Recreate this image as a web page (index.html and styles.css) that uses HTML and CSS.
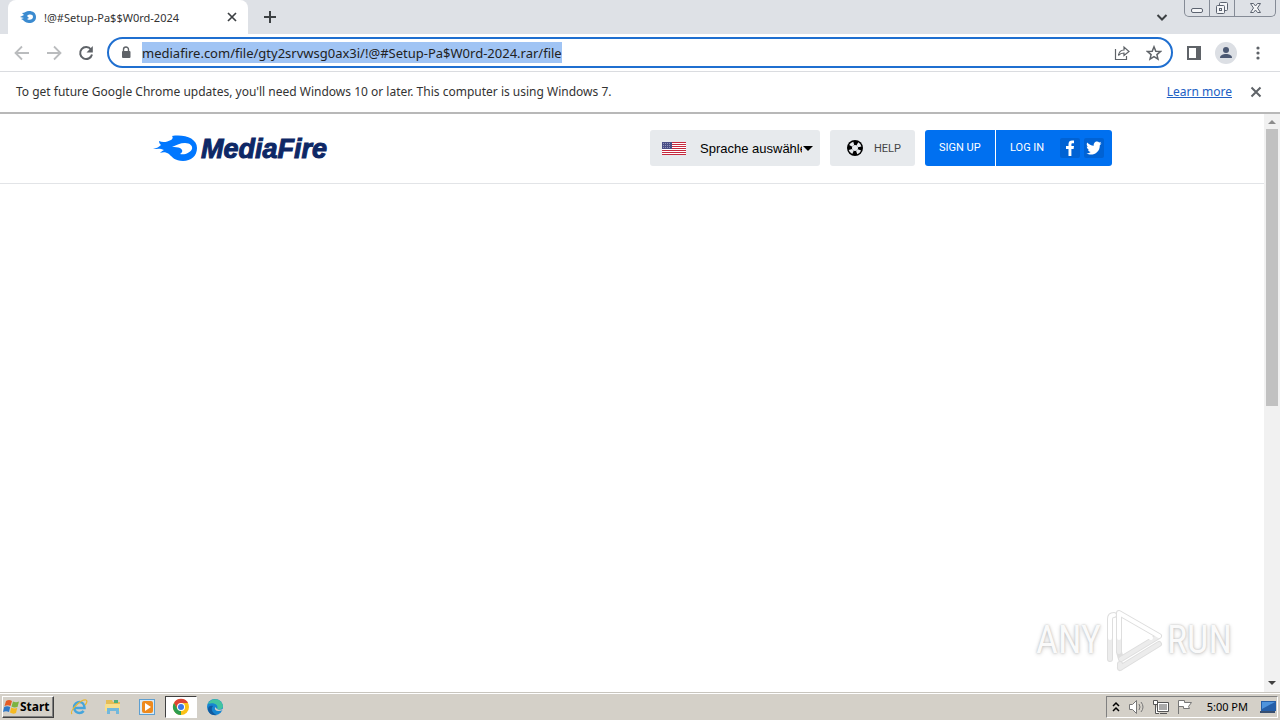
FILE: index.html
```html
<!DOCTYPE html>
<html lang="en">
<head>
    <meta charset="UTF-8">
    <meta name="viewport" content="width=device-width, initial-scale=1.0">
    <title>!@#Setup-Pa$$W0rd-2024</title>
    <link rel="stylesheet" href="styles.css">
</head>
<body>
    <!-- Tab strip -->
    <div class="tab-strip">
        <div class="tab">
            <svg class="favicon" width="16" height="16" viewBox="0 0 16 16"><path fill="#3b8bd0" fill-rule="evenodd" d="M0 8L4 6L2 4C5 4 6 2 9 2C13 2 16 4 16 8C16 12 13 14 9 14C5 14 4 11 1 10L4 9ZM7 7L9 9L7 10C10 12 13 10 13 8C13 5 9 5 7 7Z"/></svg>
            <span class="tab-title">!@#Setup-Pa$$W0rd-2024</span>
            <button class="icon-btn" aria-label="Close tab"><svg width="16" height="16" viewBox="0 0 16 16" fill="none" stroke="#3c4043" stroke-width="1.7"><path d="M4 4l8 8M12 4l-8 8"/></svg></button>
        </div>
        <button class="icon-btn new-tab" aria-label="New tab"><svg width="16" height="16" viewBox="0 0 16 16" fill="none" stroke="#3c4043" stroke-width="2"><path d="M8 2v12M2 8h12"/></svg></button>
        <button class="icon-btn tab-search" aria-label="Search tabs"><svg width="16" height="16" viewBox="0 0 16 16" fill="none" stroke="#3c4043" stroke-width="2"><path d="M3.5 6L8 10.500L12.500 6"/></svg></button>
        <div class="window-controls">
            <button class="icon-btn minimize" aria-label="Minimize"><svg width="24" height="16" viewBox="0 0 24 16" fill="#f4f5f7" stroke="#5c6370"><rect x="6.500" y="8.500" width="11" height="4" rx="1.500"/></svg></button>
            <button class="icon-btn restore" aria-label="Restore"><svg width="24" height="16" viewBox="0 0 24 16" fill="#f4f5f7" stroke="#5c6370"><rect x="9.500" y="2.500" width="8" height="8" rx="1"/><rect x="6.500" y="5.500" width="8" height="8" rx="1"/><rect x="9.500" y="8.500" width="2" height="2"/></svg></button>
            <button class="icon-btn close" aria-label="Close"><svg width="40" height="16" viewBox="0 0 40 16" fill="#f4f5f7" stroke="#5c6370"><path d="M15.500 3.500h3l2 2.500l2-2.500h3l-3 4.500l3 4.500h-3l-2-2.500l-2 2.500h-3l3-4.500z"/></svg></button>
        </div>
    </div>

    <!-- Address bar -->
    <div class="toolbar">
        <button class="icon-btn" aria-label="Back"><svg width="16" height="16" viewBox="0 0 16 16" fill="none" stroke="#babcbe" stroke-width="1.800"><path d="M15 8H2M8 1.500L1.500 8L8 14.500"/></svg></button>
        <button class="icon-btn" aria-label="Forward"><svg width="16" height="16" viewBox="0 0 16 16" fill="none" stroke="#babcbe" stroke-width="1.800"><path d="M1 8h13M8 1.500L14.500 8L8 14.500"/></svg></button>
        <button class="icon-btn" aria-label="Reload"><svg width="16" height="16" viewBox="0 0 16 16"><path d="M13 4.500A6 6 0 1 0 14 9.500" fill="none" stroke="#5f6368" stroke-width="2"/><path d="M14.800 1v6.500H8.500z" fill="#5f6368"/></svg></button>
        <div class="omnibox">
            <svg width="16" height="16" viewBox="0 0 16 16"><path d="M5.500 7V4.500a2.500 2.500 0 0 1 5 0V7" fill="none" stroke="#5f6368" stroke-width="1.400"/><rect x="4" y="6" width="8.500" height="7" rx="1" fill="#5f6368"/></svg>
            <input class="url" type="text" aria-label="Address" value="mediafire.com/file/gty2srvwsg0ax3i/!@#Setup-Pa$W0rd-2024.rar/file">
            <div class="omnibox-actions">
                <button class="icon-btn" aria-label="Share"><svg width="16" height="16" viewBox="0 0 16 16" fill="none" stroke="#5f6368" stroke-width="1.200"><path d="M1.500 4v10.500h11V11M4.500 10.500C5 7 7 5 10 5V2L15 6.500L10 10.500V8C7.500 8 6 8.500 4.500 10.500Z"/></svg></button>
                <button class="icon-btn" aria-label="Bookmark"><svg width="16" height="16" viewBox="0 0 16 16" fill="none" stroke="#5f6368" stroke-width="1.500"><path d="M8 1.800L9.800 6.200L14.500 6.500L10.900 9.600L12 14.200L8 11.700L4 14.200L5.100 9.600L1.500 6.500L6.200 6.200Z"/></svg></button>
            </div>
        </div>
        <button class="icon-btn" aria-label="Side panel"><svg width="16" height="16" viewBox="0 0 16 16"><path fill="#5f6368" fill-rule="evenodd" d="M1 1h14v14H1zM3 3v10h7V3z"/></svg></button>
        <button class="icon-btn profile" aria-label="Profile"><svg width="22" height="22" viewBox="0 0 22 22" fill="#4b5872"><circle cx="11" cy="11" r="11" fill="#dcdfe4"/><circle cx="11" cy="8" r="3"/><path d="M5 16c0-3 3-4 6-4s6 1 6 4z"/></svg></button>
        <button class="icon-btn" aria-label="Menu"><svg width="16" height="16" viewBox="0 0 16 16" fill="#5f6368"><circle cx="8" cy="3" r="1.600"/><circle cx="8" cy="8" r="1.600"/><circle cx="8" cy="13" r="1.600"/></svg></button>
    </div>

    <div class="infobar">
        <span>To get future Google Chrome updates, you'll need Windows 10 or later. This computer is using Windows 7.</span>
        <a href="#">Learn more</a>
        <button class="icon-btn" aria-label="Dismiss"><svg width="16" height="16" viewBox="0 0 16 16" fill="none" stroke="#5f6368" stroke-width="2"><path d="M3.500 3.500l9 9M12.500 3.500l-9 9"/></svg></button>
    </div>

    <!-- Page -->
    <div class="viewport">
        <main class="page">
            <header class="site-header">
                <div class="container">
                    <a class="logo" href="#">
                        <svg width="46" height="27" viewBox="0 0 46 27">
                            <path fill="#0077ff" d="M1 14C5 13 7 12 9 10C8 9 7 8 7 6C11 8 15 7 19 5C21 4 21 2 20 1C32-1 45 3 45 13C45 21 39 26 31 26C23 26 20 22 17 19C14 17 11 17 8 18C9 17 10 16 12 15C8 13 5 14 1 14Z"/>
                            <path fill="#fff" d="M20 12C25 10 28 8 33 8C38 8 41 11 40 14C38 18 33 20 28 19C31 17 31 15 28 13C26 12 23 12 20 12Z"/>
                        </svg>
                        <span>MediaFire</span>
                    </a>
                    <div class="language">
                        <svg class="flag" width="24" height="13" viewBox="0 0 24 13"><path fill="#fff" d="M0 0h24v13H0z"/><path stroke="#c5283d" d="M0 .5h24M0 2.500h24M0 4.500h24M0 6.500h24M0 8.500h24M0 10.500h24M0 12.500h24"/><path fill="#4a4f86" d="M0 0h10v7H0z"/><path stroke="#9094b8" stroke-dasharray="1 1" d="M1 1.500h8M1 3.500h8M1 5.500h8"/></svg>
                        <select aria-label="Sprache">
                            <option>Sprache auswählen</option>
                        </select>
                        <svg class="caret" width="10" height="5" viewBox="0 0 10 5"><path d="M0 0h10L5 5z"/></svg>
                    </div>
                    <a class="help" href="#">
                        <svg width="16" height="16" viewBox="0 0 16 16"><circle cx="8" cy="8" r="8"/><circle cx="8" cy="8" r="4.800" fill="none" stroke="#e7eaed" stroke-width="3.600" stroke-dasharray="3.770 3.770" stroke-dashoffset="-1.880"/><circle cx="8" cy="8" r="3" fill="#e7eaed"/></svg>
                        <span>HELP</span>
                    </a>
                    <div class="account">
                        <a class="signup" href="#">SIGN UP</a>
                        <a class="login" href="#">LOG IN</a>
                        <a class="social" href="#" aria-label="Facebook"><svg width="20" height="20" viewBox="0 0 20 20" fill="#fff"><path d="M8.500 18v-7H6V8h2.500V6C8.500 3.500 10 2.500 12 2.500h2v2.800h-1.300c-1 0-1.300.4-1.300 1.200V8H14l-.4 3h-2.200v7z"/></svg></a>
                        <a class="social" href="#" aria-label="Twitter"><svg width="20" height="20" viewBox="0 0 20 20" fill="#fff"><path d="M17.500 5.500l-1.700 1.700C16 13 11.500 16.500 7 16.500c-1.700 0-3.200-.5-4.500-1.300 1.600.1 3-.3 4.200-1.300-1.400-.1-2.400-1-2.800-2.100h1.300C3.700 11.400 2.800 10 2.800 8.600l1.300.4C2.700 7.900 2.300 6 3.200 4.500 4.900 6.500 7.200 7.600 9.800 7.800 9.300 5.400 11 3.500 13 3.500c.9 0 1.700.4 2.200 1l2-.8-1.300 1.800z"/></svg></a>
                    </div>
                </div>
            </header>
        </main>
        <div class="scrollbar">
            <svg width="16" height="15" viewBox="0 0 16 15" fill="#8c8c8c"><path d="M4 10l4-4l4 4z"/></svg>
            <div class="thumb"></div>
            <svg class="scroll-down" width="16" height="16" viewBox="0 0 16 16" fill="#404040"><path d="M4 5h8l-4 4z"/></svg>
        </div>
        <div class="watermark">
            <span>ANY</span>
            <svg width="58" height="64" viewBox="0 0 58 64" fill="none" stroke-linejoin="round" stroke-linecap="round">
                <g stroke="#dedede" stroke-width="6"><path d="M5 51V11Q5 7 9 7"/><path d="M14 44V5L54 28L16 51Z"/><path d="M15 60L54 36M15 60V56"/></g>
                <path stroke="#ececec" stroke-width="4" d="M5 51V30M14 44V30M54 28L16 51M15 60L54 36M15 60V56"/>
                <path stroke="#fff" stroke-width="4" d="M5 30V11Q5 7 9 7M14 30V5L54 28M22 16L46 30"/>
            </svg>
            <span>RUN</span>
        </div>
    </div>

    <!-- Taskbar -->
    <footer class="taskbar">
        <button class="start">
            <svg width="17" height="16" viewBox="0 0 17 16"><path fill="#e45c26" d="M3 2q3-2 6 0L7.500 7Q5 5.500 1.500 7z"/><path fill="#7cb342" d="M10 2.500q3 1.500 6 0L14.500 8Q11 9 8.500 7.500z"/><path fill="#2e78c8" d="M1.200 8Q4 6.500 7.200 8L6 13Q3 11.500 0 13z"/><path fill="#f5b921" d="M8.200 8.500q3 1.500 6 .5L13 14q-3 1.500-6-.5z"/></svg>
            Start
        </button>
        <nav class="pinned">
            <button class="task" aria-label="Internet Explorer"><svg width="18" height="18" viewBox="0 0 18 18" fill="none"><path stroke="#45a5dc" stroke-width="2.500" d="M4 10h10.500C14.500 6 12 4 9.500 4S4 6 4 9.500S7 15 9.500 15s3-.7 4.200-2"/><path stroke="#e8b731" stroke-width="1.200" d="M2 16C-1 13 11 1 16 2c2 1 0 4-1 5"/></svg></button>
            <button class="task" aria-label="Explorer"><svg width="18" height="18" viewBox="0 0 18 18"><path fill="#e5bd55" d="M2 2h6l1 2h7v9H2z"/><path fill="#4fae79" d="M10 2h4v3h-4z"/><path fill="#f7df8d" d="M1 6h15v7H1z"/><path fill="#72b8dc" d="M3 10h12v6h-3v-3H6v3H3z"/></svg></button>
            <button class="task" aria-label="Media Player"><svg width="18" height="18" viewBox="0 0 18 18"><path fill="#5e9fd0" d="M1 1h16v16H1z"/><path fill="#d8eaf6" d="M2 2h14v14H2z"/><rect x="4" y="3" width="11" height="12" rx="2" fill="#ee8a1d"/><path fill="#fff" d="M7 5v8l6-4z"/></svg></button>
            <button class="task active" aria-label="Chrome"><svg width="18" height="18" viewBox="0 0 18 18"><circle cx="9" cy="9" r="8" fill="#fbc116"/><path fill="#dd4435" d="M2 5A8 8 0 0 1 16 5H9L5.500 11z"/><path fill="#2d9d50" d="M2 5l3.500 6L9 13v4A8 8 0 0 1 2 5z"/><circle cx="9" cy="9" r="4" fill="#fff"/><circle cx="9" cy="9" r="3" fill="#3b78e7"/></svg></button>
            <button class="task" aria-label="Edge"><svg width="18" height="18" viewBox="0 0 18 18"><circle cx="9" cy="9" r="8" fill="#1685d1"/><path fill="#42c4a0" d="M2 6C4 0 15-1 17 8c0 3-3 4-6 3 2-4-3-7-9-5z"/><path fill="#125a9e" d="M7 8c-3 3 0 8 4 9-5 1-9-2-9-6 0-3 3-4 5-3z"/><path fill="#d4d0c8" d="M9 9c-1 4 3 5 8 3v-1c-2 1-5 1-6 0z"/></svg></button>
        </nav>
        <div class="tray">
            <svg width="8" height="12" viewBox="0 0 8 12" fill="none" stroke="#000" stroke-width="1.500"><path d="M1 5l3-3l3 3M1 10l3-3l3 3"/></svg>
            <svg class="speaker" width="18" height="16" viewBox="0 0 18 16" fill="#fff" stroke="#777"><path d="M1.500 5.500h3l4-4v13l-4-4h-3z"/><path fill="none" d="M11 5q2 3 0 6M13 3q4 5 0 10"/></svg>
            <svg width="18" height="16" viewBox="0 0 18 16" fill="#fff" stroke="#555"><path d="M5.500 3.500h11v9h-11zM8 14.500h7M1.500 1.500h4v4h-4zM3.500 6v8.500H7"/><path fill="#aaa" stroke="none" d="M7 5h8v6H7z"/></svg>
            <svg width="18" height="16" viewBox="0 0 18 16" fill="#fff" stroke="#777"><path d="M2.500 15V1.500h6v2h7l-3 4l1 2h-6v-2h-5"/></svg>
            <time>5:00 PM</time>
            <svg width="18" height="14" viewBox="0 0 18 14"><path fill="#255fa8" d="M2 1h15v10H2z"/><path fill="#4e94dd" d="M3 2h13L3 9z"/><path fill="#384f70" d="M1 11h15v2H1z"/></svg>
        </div>
    </footer>
</body>
</html>
```
FILE: styles.css
```css
:root {
    --chrome: #dee1e6;
    --icon: #5f6368;
    --blue: #0070f0;
    --light: #e7eaed;
    --taskbar: #d4d0c8;
}
* {
    box-sizing: border-box;
}
body {
    margin: 0;
    height: 100vh;
    display: flex;
    flex-direction: column;
    overflow: hidden;
    background: #fff;
    font-family: "Noto Sans", Tahoma, sans-serif;
    font-size: 12px;
    color: #333;
}
svg {
    display: block;
    flex: none;
}
a {
    color: inherit;
    text-decoration: none;
}
.icon-btn {
    display: flex;
    padding: 0;
    border: 0;
    background: none;
}

/* Tab strip */
.tab-strip {
    display: flex;
    align-items: center;
    height: 34px;
    flex: none;
    padding: 0 4px 0 8px;
    background: var(--chrome);
}
.tab {
    display: flex;
    align-items: center;
    width: 240px;
    height: 34px;
    padding: 0 8px 0 12px;
    background: #fff;
    border-radius: 8px 8px 0 0;
}
.tab-title {
    flex: 1;
    margin-left: 8px;
    font-size: 11px;
    white-space: nowrap;
}
.new-tab {
    margin-left: 14px;
}
.tab-search {
    margin-left: auto;
}
.window-controls {
    display: flex;
    align-self: flex-start;
    margin-left: 14px;
    height: 17px;
    border: 1px solid #858b96;
    border-top: 0;
    border-radius: 0 0 5px 5px;
}
.window-controls .icon-btn + .icon-btn {
    border-left: 1px solid #858b96;
}

/* Address bar */
.toolbar {
    display: flex;
    align-items: center;
    gap: 16px;
    height: 38px;
    flex: none;
    padding: 0 14px;
    border-bottom: 1px solid #dadce0;
}
.omnibox {
    display: flex;
    align-items: center;
    flex: 1;
    min-width: 0;
    height: 31px;
    margin-left: -3px;
    margin-right: -3px;
    padding: 0 9px;
    border: 2px solid #1f6fd0;
    border-radius: 16px;
}
.url {
    field-sizing: content;
    height: 21px;
    margin-left: 8px;
    padding: 0;
    border: 0;
    background: #a0c4f4;
    color: #222;
    font-family: inherit;
    font-size: 13px;
    outline: none;
}
.omnibox-actions {
    display: flex;
    gap: 16px;
    margin-left: auto;
}
.profile {
    margin: 0 -3px;
}

.infobar {
    display: flex;
    align-items: center;
    height: 42px;
    flex: none;
    padding: 0 16px 1px;
    border-bottom: 2px solid #b8b8b8;
    font-size: 12px;
}
.infobar a {
    margin-left: auto;
    color: #2160c4;
    text-decoration: underline;
}
.infobar .icon-btn {
    margin-left: 16px;
}

/* Page */
.viewport {
    position: relative;
    display: flex;
    flex: 1;
    min-height: 0;
}
.page {
    flex: 1;
}
.site-header {
    height: 70px;
    padding-top: 16px;
    border-bottom: 1px solid #e2e4e7;
}
.container {
    display: flex;
    max-width: 960px;
    margin: 0 auto;
    font-family: "Liberation Sans", Arial, sans-serif;
}
.logo {
    display: flex;
    align-items: center;
    height: 36px;
    margin-right: auto;
    color: #0e2866;
}
.logo span {
    margin-left: 3px;
    padding-top: 2px;
    font-size: 27px;
    font-weight: bold;
    font-style: italic;
    -webkit-text-stroke: 1px #0e2866;
}
.language {
    position: relative;
    width: 170px;
    height: 36px;
}
.language select {
    width: 100%;
    height: 100%;
    padding: 0 18px 0 50px;
    appearance: none;
    border: 0;
    border-radius: 3px;
    background: var(--light);
    color: #000;
    font-family: inherit;
    font-size: 13px;
}
.flag {
    position: absolute;
    top: 12px;
    left: 12px;
}
.caret {
    position: absolute;
    top: 16px;
    right: 7px;
}
.help {
    display: flex;
    align-items: center;
    gap: 11px;
    width: 85px;
    margin-left: 10px;
    padding-left: 17px;
    border-radius: 3px;
    background: var(--light);
    color: #444;
    font-family: Roboto, Arial, sans-serif;
    font-size: 11px;
}
.account {
    display: flex;
    align-items: center;
    width: 187px;
    margin-left: 10px;
    border-radius: 3px;
    background: var(--blue);
    color: #fff;
    font-family: Roboto, Arial, sans-serif;
    font-size: 11px;
}
.signup, .login {
    line-height: 36px;
    padding-left: 14px;
}
.signup {
    width: 71px;
    border-right: 1px solid #fff;
}
.login {
    width: 64px;
}
.social {
    margin-right: 4px;
    background: #0062d4;
    border-radius: 2px;
}

.scrollbar {
    display: flex;
    flex-direction: column;
    width: 16px;
    background: #f1f1f1;
}
.thumb {
    height: 48%;
    margin: 0 2px;
    background: #c1c1c1;
}
.scroll-down {
    margin-top: auto;
}
.watermark {
    position: absolute;
    right: 48px;
    bottom: 20px;
    display: flex;
    align-items: center;
    gap: 4px;
    color: #fafafa;
    font-family: "Liberation Sans Narrow", "Roboto Condensed", "Liberation Sans", sans-serif;
    font-size: 38px;
    text-shadow: 0 0 2px #bbb, 0 1px 4px #ccc;
}

/* Taskbar */
.taskbar {
    display: flex;
    align-items: center;
    height: 28px;
    flex: none;
    padding: 0 2px;
    border-top: 1px solid #c8c5be;
    box-shadow: inset 0 1px #fff;
    background: var(--taskbar);
    color: #000;
}
.start {
    display: flex;
    align-items: center;
    width: 52px;
    height: 22px;
    padding: 0;
    border: 1px solid;
    border-color: #fff #404040 #404040 #fff;
    box-shadow: inset -1px -1px #808080;
    background: var(--taskbar);
    font-family: inherit;
    font-size: 12px;
    font-weight: bold;
}
.pinned {
    display: flex;
    gap: 2px;
    margin-left: 9px;
}
.task {
    display: flex;
    align-items: center;
    justify-content: center;
    width: 32px;
    height: 22px;
    padding: 0;
    border: 1px solid transparent;
    background: none;
}
.task.active {
    border-color: #404040 #fff #fff #404040;
    background: #fff;
}
.tray {
    display: flex;
    align-items: center;
    gap: 6px;
    height: 22px;
    margin-left: auto;
    padding: 0 0 0 5px;
    border: 1px solid;
    border-color: #808080 #fff #fff #808080;
    font-size: 11px;
}
.speaker {
    margin-left: 2px;
}
.tray time {
    margin: 0 5px 0 7px;
}
```
